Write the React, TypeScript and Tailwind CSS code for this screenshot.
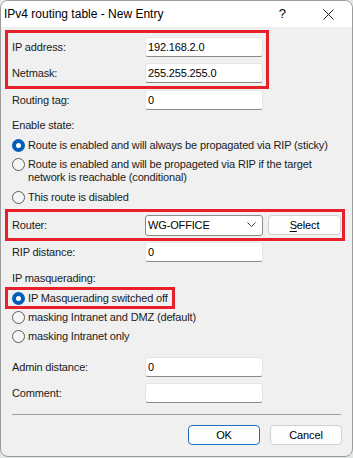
import React from 'react';

function TextBox({ value = '' }: { value?: string }) {
  return (
    <div className="w-[118px] h-[20px] bg-white border border-[#e6e6e6] border-b-[#8a8a8a] rounded-[3px] flex items-center pl-[2px] text-black leading-none">
      {value}
    </div>
  );
}

function Radio({ checked = false }: { checked?: boolean }) {
  if (checked) {
    return (
      <span className="w-[13px] h-[13px] rounded-full bg-[#005fb8] flex items-center justify-center shrink-0">
        <span className="w-[5px] h-[5px] rounded-full bg-white" />
      </span>
    );
  }
  return <span className="block w-[13px] h-[13px] rounded-full border border-[#5c5c5c] bg-[#f6f6f6] shrink-0" />;
}

function FieldRow({ label, value }: { label: string; value?: string }) {
  return (
    <div className="flex items-center h-[20px] pl-[11px]">
      <span className="w-[133px]">{label}</span>
      <TextBox value={value} />
    </div>
  );
}

function RadioRow({ label, checked, className = '' }: { label: string; checked?: boolean; className?: string }) {
  return (
    <div className={`flex items-center gap-[3px] h-[16px] ${className}`}>
      <Radio checked={checked} />
      <span className="whitespace-nowrap">{label}</span>
    </div>
  );
}

export default function App() {
  return (
    <div className="w-[353px] h-[458px] bg-[#e4e8e4] [font-family:'Liberation_Sans',Arial,sans-serif] text-[11px] tracking-[-0.15px] text-[#1b1b1b]">
      <div className="w-[353px] h-[457px] border border-[#9c9c9c] rounded-[8px] bg-[#f0f0f0] overflow-hidden flex flex-col">
        {/* title bar */}
        <div className="h-[26px] bg-white flex items-center pl-[3px] shrink-0 tracking-normal">
          <span className="text-[12px] text-black">IPv4 routing table - New Entry</span>
          <span className="ml-auto mr-[37px] text-[13px] text-black">?</span>
          <svg width="11" height="11" viewBox="0 0 11 11" className="mr-[18px]">
            <path d="M0.5 0.5 L10.5 10.5 M10.5 0.5 L0.5 10.5" stroke="#1b1b1b" strokeWidth="1" />
          </svg>
        </div>

        {/* IP / netmask */}
        <div className="mt-[3px] ml-[4px] w-[264px] border-[3px] border-[#e8202a] pt-[4px] pb-[3px] pl-[4px] flex flex-col gap-[6px]">
          <div className="flex items-center h-[20px]">
            <span className="w-[133px]">IP address:</span>
            <TextBox value="192.168.2.0" />
          </div>
          <div className="flex items-center h-[20px]">
            <span className="w-[133px]">Netmask:</span>
            <TextBox value="255.255.255.0" />
          </div>
        </div>

        <div className="mt-[1px]">
          <FieldRow label="Routing tag:" value="0" />
        </div>

        <div className="mt-[7px] h-[16px] pl-[11px] flex items-center">Enable state:</div>

        <div className="pl-[11px]">
          <RadioRow className="mt-[4px]" checked label="Route is enabled and will always be propagated via RIP (sticky)" />
          <div className="mt-[5px] flex gap-[3px] leading-[13px]">
            <span className="shrink-0 pt-[0px]">
              <Radio />
            </span>
            <span className="whitespace-nowrap">
              Route is enabled and will be propageted via RIP if the target
              <br />
              network is reachable (conditional)
            </span>
          </div>
          <RadioRow className="mt-[5px]" label="This route is disabled" />
        </div>

        {/* router */}
        <div className="mt-[4px] ml-[4px] w-[340px] h-[32px] border-[3px] border-[#e8202a] pl-[4px] pr-[1px] flex items-center">
          <span className="w-[133px]">Router:</span>
          <div className="w-[118px] h-[21px] bg-white border border-[#8a8a8a] rounded-[3px] flex items-center pl-[2px] pr-[6px] text-black">
            <span>WG-OFFICE</span>
            <svg width="9" height="6" viewBox="0 0 9 6" className="ml-auto">
              <path d="M0.5 0.5 L4.5 4.5 L8.5 0.5" fill="none" stroke="#3a3a3a" strokeWidth="1" />
            </svg>
          </div>
          <div className="ml-[5px] w-[73px] h-[20px] bg-[#fdfdfd] border border-[#d0d0d0] rounded-[4px] flex items-center justify-center text-black">
            <span>
              <span className="underline underline-offset-2">S</span>elect
            </span>
          </div>
        </div>

        <div className="mt-[1px]">
          <FieldRow label="RIP distance:" value="0" />
        </div>

        <div className="mt-[8px] h-[16px] pl-[11px] flex items-center">IP masquerading:</div>

        <div className="mt-[1px] ml-[4px] w-[170px] h-[22px] border-[3px] border-[#e8202a] pl-[4px] flex items-center">
          <RadioRow checked label="IP Masquerading switched off" />
        </div>

        <div className="pl-[11px]">
          <RadioRow label="masking Intranet and DMZ (default)" />
          <RadioRow className="mt-[3px]" label="masking Intranet only" />
        </div>

        <div className="mt-[13px]">
          <FieldRow label="Admin distance:" value="0" />
        </div>
        <div className="mt-[6px]">
          <FieldRow label="Comment:" />
        </div>

        <div className="mt-[11px] ml-[11px] w-[329px] h-[1px] bg-[#a0a0a0]" />

        <div className="mt-[10px] flex justify-end gap-[10px] pr-[10px]">
          <div className="w-[72px] h-[20px] bg-[#fdfdfd] border border-[#1f6fbf] rounded-[4px] flex items-center justify-center text-black">
            OK
          </div>
          <div className="w-[72px] h-[20px] bg-[#fdfdfd] border border-[#d0d0d0] rounded-[4px] flex items-center justify-center text-black">
            Cancel
          </div>
        </div>
      </div>
    </div>
  );
}
